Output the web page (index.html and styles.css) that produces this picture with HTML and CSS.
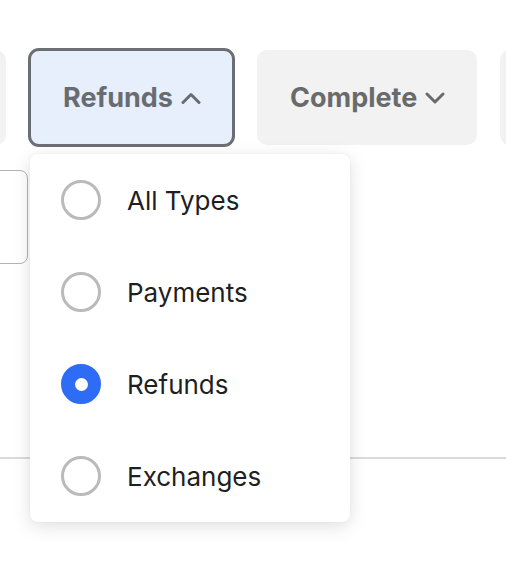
FILE: index.html
```html
<!DOCTYPE html>
<html>
<head>
<meta charset="utf-8">
<link rel="stylesheet" href="styles.css">
</head>
<body>
<div class="page">
  <div class="filters">
    <div class="chip chip-prev"></div>
    <div class="filter-wrap">
      <button class="chip chip-open">Refunds
        <svg class="chev" width="20" height="12" viewBox="0 0 20 12"><path d="M2 10.5 L10 2.5 L18 10.5" fill="none" stroke="currentColor" stroke-width="3" stroke-linecap="round" stroke-linejoin="round"/></svg>
      </button>
      <div class="menu">
        <div class="item"><span class="radio"></span><span class="label">All Types</span></div>
        <div class="item"><span class="radio"></span><span class="label">Payments</span></div>
        <div class="item"><span class="radio checked"></span><span class="label">Refunds</span></div>
        <div class="item"><span class="radio"></span><span class="label">Exchanges</span></div>
      </div>
    </div>
    <button class="chip">Complete
      <svg class="chev" width="20" height="12" viewBox="0 0 20 12"><path d="M2 2 L10 10 L18 2" fill="none" stroke="currentColor" stroke-width="3" stroke-linecap="round" stroke-linejoin="round"/></svg>
    </button>
    <div class="chip chip-next"></div>
  </div>
  <div class="content">
    <div class="field"></div>
    <div class="divider"></div>
  </div>
</div>
</body>
</html>
```
FILE: styles.css
```css
* { box-sizing: border-box; }
html, body { margin: 0; padding: 0; background: #fff; }
body { width: 506px; height: 562px; overflow: hidden; font-family: Inter, "Noto Sans", sans-serif; }
.page { position: relative; width: 506px; height: 562px; overflow: hidden; }
.filters {
  display: flex;
  align-items: center;
  gap: 22px;
  padding-top: 48px;
  margin-left: -94px;
}
.chip {
  flex: none;
  height: 95px;
  border: none;
  border-radius: 10px;
  background: #f2f2f2;
  color: #696a6c;
  font-family: Inter, "Noto Sans", sans-serif;
  font-weight: 700;
  font-size: 27px;
  padding: 0 0 0 33px;
  display: flex;
  align-items: center;
  gap: 8px;
  width: 220px;
}
.chip-prev { width: 100px; }
.chip-next { width: 100px; margin-left: 1px; }
.filter-wrap { position: relative; flex: none; }
.chip-open {
  width: 207px;
  height: 99px;
  background: #e8effc;
  border: 3px solid #6b6e72;
  color: #686c72;
  padding: 0 0 0 32px;
  border-radius: 11px;
}
.chev { display: block; margin-top: 1px; }
.menu {
  position: absolute;
  left: 2px;
  top: 106px;
  width: 320px;
  background: #fff;
  border-radius: 8px;
  box-shadow: 0 4px 18px rgba(0,0,0,0.13), 0 0 3px rgba(0,0,0,0.04);
  z-index: 2;
}
.item {
  height: 92px;
  display: flex;
  align-items: center;
  padding-left: 31px;
  gap: 26px;
}
.radio {
  width: 40px;
  height: 40px;
  border-radius: 50%;
  border: 3px solid #bababa;
  flex: none;
  display: flex;
  align-items: center;
  justify-content: center;
}
.radio.checked { background: #2e6cf6; border-color: #2e6cf6; }
.radio.checked::after {
  content: "";
  width: 13px;
  height: 13px;
  border-radius: 50%;
  background: #fff;
}
.label { font-size: 26px; color: #1f1f1f; font-weight: 400; }
.content { position: relative; padding-top: 23px; }
.field {
  width: 128px;
  height: 94px;
  margin-left: -100px;
  border: 1.5px solid #b3b3b3;
  border-radius: 8px;
}
.divider {
  margin-top: 193px;
  height: 2px;
  background: #dadada;
}
```
